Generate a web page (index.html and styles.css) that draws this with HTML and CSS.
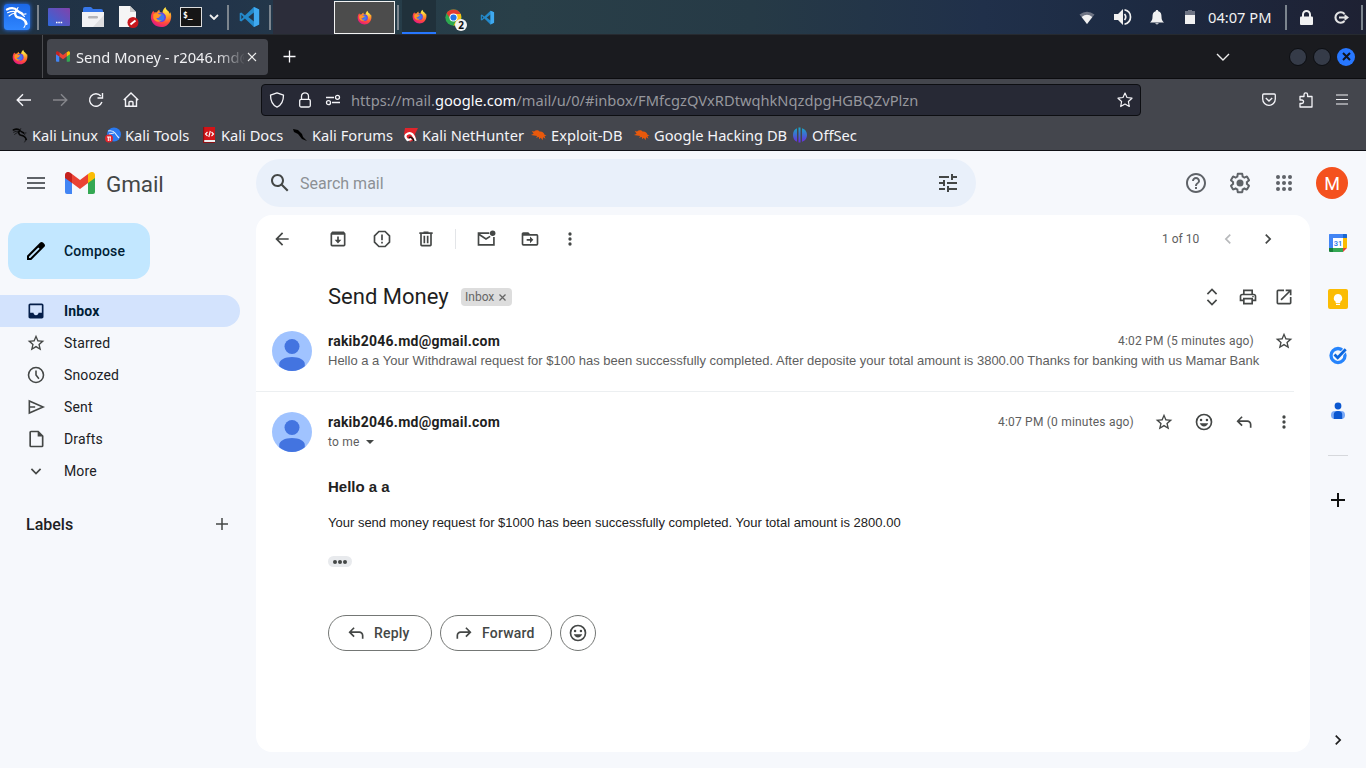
FILE: index.html
```html
<!DOCTYPE html>
<html lang="en">
<head>
<meta charset="utf-8">
<title>Send Money - Gmail</title>
<link rel="stylesheet" href="styles.css">
</head>
<body>
<svg class="defs" width="0" height="0" aria-hidden="true">
  <defs>
    <radialGradient id="fxg" cx=".75" cy=".15" r=".95"><stop offset="0" stop-color="#fff04a"/><stop offset=".35" stop-color="#ffa42c"/><stop offset=".68" stop-color="#ff4b3a"/><stop offset="1" stop-color="#e31587"/></radialGradient>
    <linearGradient id="desk" x1="0" y1="1" x2="1" y2="0"><stop offset="0" stop-color="#2e69dc"/><stop offset="1" stop-color="#8242aa"/></linearGradient>
    <linearGradient id="off" x1="0" y1="0" x2="0" y2="1"><stop offset="0" stop-color="#18a9c4"/><stop offset="1" stop-color="#6a2be0"/></linearGradient>
    <symbol id="firefox" viewBox="0 0 24 24">
      <path fill="url(#fxg)" d="M3.6 5.2c.3.9.8 1.4 1.4 1.8.8-.3 1.800-.4 2.600-.2.5-1.100 1.500-2.200 2.700-2.700-.3 1.200.2 2.100 1.100 2.700l2.300.8c-.2-2.500 1.200-5 3.300-6.600.1 2.100 1.300 3.100 2.500 4.300 1.300 1.100 1.700 2.300 1.800 3.200l.9-1.700c1 2.100 1.100 4.300.8 6.300C22.200 19 17.900 23 12.200 23 6 23 1 18.300 1 12.300c0-2.500.9-5.300 2.600-7.100z"/>
      <circle cx="12.200" cy="12.300" r="5.200" fill="#6c3fe0"/>
      <path fill="#3d7bf0" d="M9 8.500c2-.5 5-.5 6.400 2.200 1.200 2.700-.6 5.500-3.300 5.900-2.500.2-4.400-1.300-4.800-3.300 1.500.8 3 .4 3.700-.4-1-.5-2-2-2-4.400z"/>
      <path fill="#ff9526" d="M3.600 9.300c1.900-1.800 4.700-1.700 6.300-.4l2.500.5c.4 1.100-1.600 1.300-1.900 2.100-.2 1.300-2.300 2-3.700 1.600 1 2.300 3.600 3.300 6 2.200-2.300 3.400-7.700 2-9.200-1.900z"/>
    </symbol>
    <symbol id="dragon" viewBox="0 0 24 24"><g fill="none" stroke="currentColor" stroke-linecap="round" stroke-linejoin="round"><path stroke-width="2.300" d="M2 4.500c4-1.900 8-1.700 10.500 1.300 1.200 1.400 2.500 1.700 4.500 2.700M12 5.500c-3.200 1.600-1.900 6.500 1.500 7 4 .5 6.800 2.500 8 6.300"/><path stroke-width="1.100" d="M2.500 7.800c3-1.400 5.500-1.700 8-1.200M4 11c2-1.700 3.700-2.600 6-3M16 8.500l3 .7 2-.3M17 9.500l2.500 2M11 6l2-3.500M20 16c.8 3 .2 5-1 6.500"/></g></symbol>
    <symbol id="vscode" viewBox="0 0 24 24"><path fill="#2489ca" d="M16.800 1L22.500 3.700v16.600L16.800 23 7 13.700l-4 3.100-1.700-.8v-8l1.700-.8 4 3.100zM3.100 9.500v5l2.400-2.500zM16.800 7.200L10.700 12l6.100 4.800z"/><path fill="#3fa9f0" d="M16.800 1L22.500 3.700v16.600L16.800 23z"/></symbol>
    <symbol id="chrome" viewBox="0 0 24 24"><circle cx="12" cy="12" r="11.500" fill="#2da94f"/><path fill="#fbc116" d="M12 12V7h10.300c2.400 7-1.800 16-10.400 16.500l4.300-8.500z"/><path fill="#e33b2e" d="M2.200 6C6-.5 18-1.500 22.200 7H12l-4.300 7z"/><circle cx="12" cy="12" r="5.700" fill="#fff"/><circle cx="12" cy="12" r="4.400" fill="#2374e8"/></symbol>
    <symbol id="gmail" viewBox="0 0 30 22"><path fill="#4285f4" d="M0 5l7 5v12H2a2 2 0 0 1-2-2z"/><path fill="#34a853" d="M30 5l-7 5v12h5a2 2 0 0 0 2-2z"/><path fill="#ea4335" d="M7 2l8 6 8-6v9l-8 6-8-6z"/><path fill="#c5221f" d="M0 5V3c0-2.600 3-3.900 5-2.400L7 2v9L0 6z"/><path fill="#fbbc04" d="M30 5V3c0-2.600-3-3.900-5-2.400L23 2v9l7-5z"/></symbol>
    <symbol id="bug" viewBox="0 0 16 16"><path fill="#e8590c" d="M3 4.500c2-2 4.500-1.500 5.500 0 2.600-.3 4.600 1 5 3.300l2 .5-2 .9 1 2.600-2.400-1.500-.5 3-1.800-2.600-1.700 1.600-.2-2.300-3 .7 1.300-1.800L3 8.500 0 8l2.600-1.300L.8 4z"/></symbol>
    <symbol id="star" viewBox="0 0 24 24"><path d="M22 9.240l-7.190-.62L12 2 9.190 8.630 2 9.240l5.460 4.730L5.820 21 12 17.270 18.180 21l-1.630-7.030L22 9.240zM12 15.400l-3.760 2.270 1-4.280-3.320-2.880 4.380-.38L12 6.100l1.710 4.040 4.380.38-3.320 2.880 1 4.280L12 15.400z"/></symbol>
    <symbol id="back" viewBox="0 0 24 24"><path d="M20 11H7.830l5.590-5.590L12 4l-8 8 8 8 1.410-1.410L7.830 13H20v-2z"/></symbol>
    <symbol id="reply" viewBox="0 0 24 24"><path d="M19 19v-4c0-1.660-1.340-3-3-3H6.830l3.580 3.590L9 17l-6-6 6-6 1.410 1.410L6.830 10H16c2.760 0 5 2.240 5 5v4z"/></symbol>
    <symbol id="dots" viewBox="0 0 24 24"><circle cx="12" cy="6" r="2"/><circle cx="12" cy="12" r="2"/><circle cx="12" cy="18" r="2"/></symbol>
    <symbol id="chev" viewBox="0 0 24 24"><path d="M8.590 16.590L13.170 12 8.590 7.410 10 6l6 6-6 6z"/></symbol>
    <symbol id="smile" viewBox="0 0 24 24"><circle cx="12" cy="12" r="9" fill="none" stroke="currentColor" stroke-width="2"/><circle cx="8.500" cy="9.500" r="1.500"/><circle cx="15.500" cy="9.500" r="1.500"/><path d="M7 13.500h10c-.8 2.300-2.700 3.800-5 3.800s-4.200-1.500-5-3.800z"/></symbol>
    <symbol id="person" viewBox="0 0 40 40"><circle cx="20" cy="20" r="20" fill="#a0c3ff"/><circle cx="20" cy="15.500" r="7.500" fill="#4374e0"/><path fill="#4374e0" d="M7.200 35.300V33c0-4.200 5.800-7 12.800-7s12.800 2.800 12.800 7v2.300A20 20 0 0 1 20 40a20 20 0 0 1-12.800-4.700z"/></symbol>
  </defs>
</svg>

<div class="panel">
  <span class="kali"><svg width="24" height="24"><use href="#dragon"/></svg></span>
  <i class="bar b1"></i>
  <svg class="desk" width="22" height="18" viewBox="0 0 22 18"><rect width="22" height="18" rx="1" fill="url(#desk)"/><path stroke="#fff" stroke-width="1.500" stroke-dasharray="1.500 .8" d="M8 14.500h7"/></svg>
  <svg class="folder" width="22" height="20" viewBox="0 0 22 20"><path fill="#3676e8" d="M1 2q0-2 2-2h6l2 2h8q2 0 2 2v3H1z"/><path fill="#f2f2f4" d="M0 5h22v15H0z"/><path fill="#dedee0" d="M22 8v12H11z"/><rect x="6" y="9" width="10" height="2.500" rx="1.200" fill="#b4b4b8"/></svg>
  <svg class="file" width="22" height="22" viewBox="0 0 22 22"><path fill="#f5f5f5" d="M1 0h11l6 6v15H1z"/><path fill="#c9c9c9" d="M12 0l6 6h-6z"/><circle cx="15" cy="16.500" r="5.500" fill="#c8171d"/><path stroke="#fff" stroke-width="2" d="M12.500 18.500l5-4"/></svg>
  <svg class="fx1" width="22" height="22"><use href="#firefox"/></svg>
  <span class="term">$_</span>
  <svg class="pchev" width="10" height="6" viewBox="0 0 10 6"><path d="M1 1l4 4 4-4" fill="none" stroke="#f0f0f0" stroke-width="1.800"/></svg>
  <i class="bar b2"></i>
  <svg class="vs1" width="23" height="22"><use href="#vscode"/></svg>
  <i class="bar b3"></i>
  <span class="gapbox"></span>
  <span class="winbtn"><svg width="15" height="15"><use href="#firefox"/></svg></span>
  <i class="bar b4"></i>
  <span class="task"><svg width="15" height="15"><use href="#firefox"/></svg></span>
  <span class="chrome"><svg width="17" height="17"><use href="#chrome"/></svg><b>2</b></span>
  <svg class="vs2" width="15" height="15"><use href="#vscode"/></svg>
  <span class="grow"></span>
  <svg class="wifi" width="16" height="13" viewBox="0 0 16 13"><path fill="#6e7484" d="M.5 3.500Q8-2 15.500 3.500L8 13z"/><path fill="#f1f1f1" d="M2.700 6Q8 1.500 13.300 6L8 13z"/></svg>
  <svg class="vol" width="18" height="18" viewBox="0 0 18 18"><path fill="#f1f1f1" d="M0 6h4l5-5v16l-5-5H0z"/><path fill="none" stroke="#f1f1f1" stroke-width="1.700" d="M10.500 6q2.500 3 0 6M10.500 1.800q6 1.500 6 7.200t-6 7.200"/></svg>
  <svg class="bell" width="14" height="15" viewBox="0 0 14 15"><path fill="#f1f1f1" d="M7 0c1 0 1.200.6 1.300 1.300C11 2 11.500 4 11.500 7c0 3 1 4 2.500 5.500H0C1.500 11 2.500 10 2.500 7c0-3 .5-5 3.200-5.700C5.800.6 6 0 7 0zM5 13.300h4Q7 15.500 5 13.300z"/></svg>
  <svg class="batt" width="10" height="14" viewBox="0 0 10 14"><path fill="#6e7484" d="M3 0h4v1h3v5H0V1h3z"/><path fill="#f1f1f1" d="M0 5h10v9H0z"/></svg>
  <span class="clock">04:07 PM</span>
  <i class="bar b5"></i>
  <svg class="lock" width="13" height="15" viewBox="0 0 13 15"><path fill="none" stroke="#f1f1f1" stroke-width="2" d="M3 7V4.500a3.500 3.500 0 0 1 7 0V7"/><rect y="6.500" width="13" height="8.500" rx="1" fill="#f1f1f1"/></svg>
  <svg class="logout" width="15" height="13" viewBox="0 0 15 13"><path fill="none" stroke="#e4e4e4" stroke-width="2.100" d="M10.500 3a5.200 5.200 0 1 0 0 7"/><path fill="#e4e4e4" d="M5 5.500h5.500V3L15 6.500 10.500 10V7.500H5z"/></svg>
  <i class="bar b6"></i>
</div>

<div class="tabs">
  <span class="fxview"><svg width="16" height="16"><use href="#firefox"/></svg></span>
  <div class="tab"><svg width="14" height="11"><use href="#gmail"/></svg><span class="title">Send Money - r2046.md@gmail.com</span><svg class="x" width="10" height="10" viewBox="0 0 10 10"><path d="M1 1l8 8M9 1L1 9" stroke="#eee" stroke-width="1.100"/></svg></div>
  <svg class="plus" width="13" height="13" viewBox="0 0 13 13"><path d="M6.500 .5v12M.5 6.500h12" stroke="#fbfbfe" stroke-width="1.300"/></svg>
  <span class="grow"></span>
  <svg class="tchev" width="14" height="8" viewBox="0 0 14 8"><path d="M1 1l6 6 6-6" fill="none" stroke="#eee" stroke-width="1.400"/></svg>
  <i class="wb"></i><i class="wb"></i><span class="wclose"><svg width="9" height="9" viewBox="0 0 9 9"><path d="M1 1l7 7M8 1L1 8" stroke="#10141f" stroke-width="2"/></svg></span>
</div>

<div class="nav">
  <svg class="nback" width="16" height="14" viewBox="0 0 16 14"><path d="M15 7H1.500M7 1.200L1.200 7 7 12.800" fill="none" stroke="#f4f4f8" stroke-width="1.400"/></svg>
  <svg class="nfwd" width="16" height="14" viewBox="0 0 16 14"><path d="M1 7h13.500M9 1.200L14.800 7 9 12.800" fill="none" stroke="#86878c" stroke-width="1.400"/></svg>
  <svg class="nrel" width="16" height="16" viewBox="0 0 16 16"><path d="M13.900 10A6.300 6.300 0 1 1 12.800 4" fill="none" stroke="#f4f4f8" stroke-width="1.400"/><path d="M9.500 6h5V1" fill="none" stroke="#f4f4f8" stroke-width="1.400"/></svg>
  <svg class="nhome" width="16" height="16" viewBox="0 0 16 16"><path d="M.8 8L8 1l7.200 7M2.500 7v7.300h11V7M6 14v-3.500q0-1 1-1h2q1 0 1 1V14" fill="none" stroke="#f4f4f8" stroke-width="1.400"/></svg>
  <div class="url">
    <svg class="shield" width="16" height="16" viewBox="0 0 16 16"><path d="M8 .8l6.500 2.300c0 5-1 9.700-6.500 12.100C2.500 12.800 1.500 8.100 1.500 3.100z" fill="none" stroke="#f4f4f8" stroke-width="1.300" stroke-linejoin="round"/></svg>
    <svg class="ulock" width="14" height="16" viewBox="0 0 14 16"><path d="M3.500 7.500V4.300a3.500 3.500 0 0 1 7 0v3.200" fill="none" stroke="#f4f4f8" stroke-width="1.300"/><rect x="1.700" y="7.300" width="10.600" height="7.700" rx="1.500" fill="none" stroke="#f4f4f8" stroke-width="1.300"/></svg>
    <svg class="perm" width="16" height="12" viewBox="0 0 16 12"><path d="M1 3.500h8M7 8.500h8" stroke="#f4f4f8" stroke-width="1.400"/><circle cx="12.500" cy="3.300" r="2" fill="none" stroke="#f4f4f8" stroke-width="1.300"/><circle cx="3.500" cy="8.700" r="2" fill="none" stroke="#f4f4f8" stroke-width="1.300"/></svg>
    <span class="addr">https://mail.<b>google.com</b>/mail/u/0/#inbox/FMfcgzQVxRDtwqhkNqzdpgHGBQZvPlzn</span>
    <svg class="ustar" width="16" height="16" viewBox="0 0 16 16"><path d="M8 1l2 4.500 5 .7-3.600 3.300.9 5L8 12l-4.300 2.500.9-5L1 6.200l5-.7z" fill="none" stroke="#f4f4f8" stroke-width="1.200" stroke-linejoin="round"/></svg>
  </div>
  <span class="grow"></span>
  <svg class="pocket" width="14" height="14" viewBox="0 0 14 14"><path d="M1.700 1h10.600q1 0 1 1v4a6.300 6.300 0 0 1-12.600 0V2q0-1 1-1zM3.800 5L7 8l3.200-3" fill="none" stroke="#f4f4f8" stroke-width="1.300"/></svg>
  <svg class="ext" width="14" height="16" viewBox="0 0 14 16"><path d="M1 8V4.500h4V2.700a1.800 1.800 0 0 1 3.600 0v1.800H13V15H1v-3.500h1.800a1.700 1.700 0 0 0 0-3.500z" fill="none" stroke="#f4f4f8" stroke-width="1.300" stroke-linejoin="round"/></svg>
  <svg class="burger" width="12" height="11" viewBox="0 0 12 11"><path d="M0 1h12M0 5.500h12M0 10h12" stroke="#f4f4f8" stroke-width="1.200"/></svg>
</div>

<div class="marks">
  <a class="m1"><svg class="blk" width="16" height="16"><use href="#dragon"/></svg>Kali Linux</a>
  <a class="m2"><svg width="16" height="16" viewBox="0 0 16 16"><circle cx="9" cy="7.500" r="7" fill="#2a79f0"/><path d="M3 4q5-1 7 2t4 5M4 7l5-1" fill="none" stroke="#dbe9ff" stroke-width="1.200"/><circle cx="4" cy="11.500" r="4" fill="#e0242b"/><path d="M2 10h4M3.300 10v4M5.200 10v4" stroke="#fff"/></svg>Kali Tools</a>
  <a class="m3"><svg width="16" height="16" viewBox="0 0 16 16"><path fill="#d21418" d="M2 0h12v13H2z"/><path fill="#eee" d="M3 13h11v2H3z"/><path fill="#8d1013" d="M2 0h1.200v16H2zM3 15h11v1H3z"/><path d="M6.500 5l-2 2 2 2M10.500 5l2 2-2 2M9.300 4L7.800 10" stroke="#fff" stroke-width="1.100" fill="none"/></svg>Kali Docs</a>
  <a class="m4"><svg class="blk" width="16" height="16" viewBox="0 0 16 16"><path d="M1 2l5 1 4 4 1 3 4 4-5-2-4-5-4-2z" fill="#000"/></svg>Kali Forums</a>
  <a class="m5"><svg width="16" height="16" viewBox="0 0 16 16"><path fill="#e0252c" d="M3 1h13l-3 6 1 5-6 3-6-8z"/><path d="M13.500 14Q11 4.500 6 6.500T5.500 13l4-1" fill="none" stroke="#fff" stroke-width="2.300"/><path d="M7 11q1.500-2 4 1l1 2" stroke="#111" stroke-width="1.500" fill="none"/></svg>Kali NetHunter</a>
  <a class="m6"><svg width="16" height="16"><use href="#bug"/></svg>Exploit-DB</a>
  <a class="m7"><svg width="16" height="16"><use href="#bug"/></svg>Google Hacking DB</a>
  <a class="m8"><svg width="16" height="16" viewBox="0 0 16 16"><path fill="url(#off)" d="M5 1.200v13.600Q1 13 1 8t4-6.800zM6.500.5h2v15h-2zM10 1.200v13.600q5-1.800 5-6.800t-5-6.800z"/></svg>OffSec</a>
</div>

<div class="gmail">
  <header class="head">
    <svg class="menu" width="18" height="12" viewBox="0 0 18 12"><path d="M0 1h18M0 6h18M0 11h18" stroke="#5f6368" stroke-width="2"/></svg>
    <svg class="glogo" width="30" height="22"><use href="#gmail"/></svg>
    <span class="gname">Gmail</span>
    <div class="search">
      <svg width="24" height="24" viewBox="0 0 24 24"><path d="M20.490 19l-5.730-5.730C15.530 12.200 16 10.910 16 9.500 16 5.910 13.090 3 9.500 3S3 5.910 3 9.500 5.910 16 9.500 16c1.410 0 2.700-.47 3.770-1.240L19 20.490 20.490 19zM5 9.500C5 7.010 7.010 5 9.500 5S14 7.010 14 9.500 11.990 14 9.500 14 5 11.990 5 9.500z"/></svg>
      <span class="ph">Search mail</span>
      <svg width="24" height="24" viewBox="0 0 24 24"><path d="M3 17v2h6v-2H3zM3 5v2h10V5H3zm10 16v-2h8v-2h-8v-2h-2v6h2zM7 9v2H3v2h4v2h2V9H7zm14 4v-2H11v2h10zm-6-4h2V7h4V5h-4V3h-2v6z"/></svg>
    </div>
    <span class="grow"></span>
    <div class="tools">
      <svg width="24" height="24" viewBox="0 0 24 24"><path d="M11 18h2v-2h-2v2zm1-16C6.480 2 2 6.480 2 12s4.480 10 10 10 10-4.480 10-10S17.520 2 12 2zm0 18c-4.410 0-8-3.590-8-8s3.590-8 8-8 8 3.590 8 8-3.590 8-8 8zm0-14c-2.210 0-4 1.790-4 4h2c0-1.100.9-2 2-2s2 .9 2 2c0 2-3 1.750-3 5h2c0-2.250 3-2.500 3-5 0-2.210-1.790-4-4-4z"/></svg>
      <svg width="24" height="24" viewBox="0 0 24 24"><path d="M13.850 22.250h-3.700c-.74 0-1.360-.54-1.450-1.270l-.27-1.890c-.27-.14-.53-.29-.79-.46l-1.800.72c-.7.26-1.470-.03-1.810-.65L2.200 15.530c-.35-.66-.2-1.440.36-1.880l1.530-1.190c-.01-.15-.02-.3-.02-.46 0-.15.01-.31.02-.46l-1.520-1.190c-.59-.45-.74-1.260-.37-1.880l1.850-3.190c.34-.62 1.110-.9 1.790-.63l1.810.73c.26-.17.52-.32.78-.46l.27-1.910c.09-.7.71-1.250 1.440-1.250h3.700c.74 0 1.360.54 1.450 1.270l.27 1.890c.27.14.53.29.79.46l1.800-.72c.71-.26 1.480.03 1.820.65l1.840 3.180c.36.66.2 1.440-.36 1.880l-1.520 1.190c.01.15.02.3.02.46s-.01.31-.02.46l1.520 1.190c.56.45.72 1.230.37 1.860l-1.860 3.220c-.34.62-1.110.9-1.800.63l-1.800-.72c-.26.17-.52.32-.78.46l-.27 1.910c-.1.68-.72 1.220-1.460 1.220zm-3.230-2h2.760l.37-2.550.53-.22c.44-.18.88-.44 1.340-.78l.45-.34 2.380.96 1.380-2.400-2.030-1.580.07-.56c.03-.26.06-.51.06-.78s-.03-.53-.06-.78l-.07-.56 2.030-1.580-1.390-2.400-2.390.96-.45-.35c-.42-.32-.87-.58-1.330-.77l-.52-.22-.37-2.550h-2.760l-.37 2.550-.53.21c-.44.19-.88.44-1.340.79l-.45.33-2.380-.95-1.390 2.390 2.030 1.580-.07.56a7 7 0 0 0-.06.79c0 .26.02.53.06.78l.07.56-2.030 1.580 1.380 2.400 2.390-.96.45.35c.43.33.86.58 1.330.77l.53.22.38 2.550z"/><circle cx="12" cy="12" r="3.500"/></svg>
      <svg width="24" height="24" viewBox="0 0 24 24"><circle cx="6" cy="6" r="2"/><circle cx="12" cy="6" r="2"/><circle cx="18" cy="6" r="2"/><circle cx="6" cy="12" r="2"/><circle cx="12" cy="12" r="2"/><circle cx="18" cy="12" r="2"/><circle cx="6" cy="18" r="2"/><circle cx="12" cy="18" r="2"/><circle cx="18" cy="18" r="2"/></svg>
    </div>
    <span class="me">M</span>
  </header>

  <div class="content">
    <aside class="side">
      <div class="compose"><svg width="24" height="24" viewBox="0 0 24 24"><path fill="#000" d="M20.400 5L19 3.600c-.8-.8-2-.8-2.800 0L3 16.800V21h4.200L20.400 7.800c.8-.8.8-2 0-2.800zM6.300 19H5v-1.300l9.300-9.300 1.300 1.300z"/></svg><span>Compose</span></div>
      <nav>
        <a class="on"><svg width="20" height="20" viewBox="0 0 24 24"><path d="M19 3H5c-1.100 0-2 .9-2 2v14c0 1.100.9 2 2 2h14c1.100 0 2-.9 2-2V5c0-1.100-.9-2-2-2zm0 11h-4c0 1.700-1.300 3-3 3s-3-1.300-3-3H5V5h14z"/></svg><span>Inbox</span></a>
        <a><svg width="20" height="20"><use href="#star"/></svg><span>Starred</span></a>
        <a><svg width="20" height="20" viewBox="0 0 24 24"><path fill="none" stroke="currentColor" stroke-width="1.900" d="M12 3a9 9 0 1 0 0 18 9 9 0 0 0 0-18zM12 6.500V12l3.500 4.500"/></svg><span>Snoozed</span></a>
        <a><svg width="20" height="20" viewBox="0 0 24 24"><path fill="none" stroke="currentColor" stroke-width="1.900" d="M4 4.700L20.500 12 4 19.300zM4 12h7"/></svg><span>Sent</span></a>
        <a><svg width="20" height="20" viewBox="0 0 24 24"><path fill-rule="evenodd" d="M6 2h9l6 6v12a2 2 0 0 1-2 2H6a2 2 0 0 1-2-2V4c0-1.100.9-2 2-2zm0 2v16h13V9h-5V4z"/></svg><span>Drafts</span></a>
        <a><svg width="20" height="20" viewBox="0 0 24 24"><path fill="none" stroke="currentColor" stroke-width="2" d="M6.500 9.500L12 15l5.500-5.500"/></svg><span>More</span></a>
      </nav>
      <div class="labels"><span>Labels</span><svg width="14" height="14" viewBox="0 0 14 14"><path d="M7 1v12M1 7h12" stroke="#444746" stroke-width="1.500"/></svg></div>
    </aside>

    <main>
      <div class="bar-tools">
        <svg class="t1"><use href="#back"/></svg>
        <svg class="t2" viewBox="0 0 24 24"><path fill-rule="evenodd" d="M5 3h14l2 2.500V19a2 2 0 0 1-2 2H5a2 2 0 0 1-2-2V5.500zm0 4v12h14V7zM11 9h2v4h3l-4 4.500L8 13h3z"/></svg>
        <svg class="t3" viewBox="0 0 24 24"><path fill="none" stroke="currentColor" stroke-width="2" d="M8.300 3h7.400L21 8.300v7.400L15.700 21H8.300L3 15.700V8.300z"/><path d="M11 6.500h2v7h-2zM11 15.300h2v2h-2z"/></svg>
        <svg class="t4" viewBox="0 0 24 24"><path fill-rule="evenodd" d="M9 3h6v1h5v2h-1v13a2 2 0 0 1-2 2H7a2 2 0 0 1-2-2V6H4V4h5zM7 6v13h10V6zm2 2h2v9H9zm4 0h2v9h-2z"/></svg>
        <i class="sep"></i>
        <svg class="t5" viewBox="0 0 24 24"><path fill="none" stroke="currentColor" stroke-width="2" d="M16 5H3v14h18.500V9.500M3 6l9 6 5-3.200"/><circle cx="20" cy="5" r="3.300"/></svg>
        <svg class="t6" viewBox="0 0 24 24"><path fill-rule="evenodd" d="M4 4h6l2 2h8a2 2 0 0 1 2 2v10a2 2 0 0 1-2 2H4a2 2 0 0 1-2-2V6c0-1.100.9-2 2-2zm0 4v10h16V8zM12 9l4 4-4 4v-3H8v-2h4z"/></svg>
        <svg class="t7"><use href="#dots"/></svg>
        <span class="grow"></span>
        <span class="count">1 of 10</span>
        <svg class="pv"><use href="#chev"/></svg>
        <svg class="nx"><use href="#chev"/></svg>
      </div>

      <div class="subject">
        <h1>Send Money</h1>
        <span class="chip">Inbox<svg width="7" height="7" viewBox="0 0 7 7"><path d="M.5 .5l6 6M6.500 .5l-6 6" stroke="#666" stroke-width="1.300"/></svg></span>
        <span class="grow"></span>
        <svg viewBox="0 0 24 24"><path fill="none" stroke="currentColor" stroke-width="2" d="M6.500 8.500L12 3l5.500 5.500M6.500 15.500L12 21l5.500-5.500"/></svg>
        <svg viewBox="0 0 24 24"><path fill-rule="evenodd" d="M6 3h12v5h1c1.700 0 3 1.300 3 3v6h-4v4H6v-4H2v-6c0-1.700 1.300-3 3-3h1zm2 2v3h8V5zM5 10q-1 0-1 1v4h2v-2h12v2h2v-4q0-1-1-1zm3 5v4h8v-4z"/><circle cx="18" cy="11.500" r="1"/></svg>
        <svg viewBox="0 0 24 24"><path d="M19 19H5V5h7V3H5a2 2 0 0 0-2 2v14a2 2 0 0 0 2 2h14a2 2 0 0 0 2-2v-7h-2zM14 3v2h3.590l-9.830 9.830 1.410 1.410L19 6.410V10h2V3z"/></svg>
      </div>

      <section class="msg first">
        <svg class="avatar"><use href="#person"/></svg>
        <div class="info">
          <div class="line"><span class="from">rakib2046.md@gmail.com</span><span class="grow"></span><span class="time">4:02 PM (5 minutes ago)</span><svg><use href="#star"/></svg></div>
          <p class="snippet">Hello a a Your Withdrawal request for $100 has been successfully completed. After deposite your total amount is 3800.00 Thanks for banking with us Mamar Bank</p>
        </div>
      </section>

      <section class="msg second">
        <svg class="avatar"><use href="#person"/></svg>
        <div class="info">
          <div class="line"><span class="from">rakib2046.md@gmail.com</span><span class="grow"></span><span class="time">4:07 PM (0 minutes ago)</span><svg><use href="#star"/></svg><svg><use href="#smile"/></svg><svg><use href="#reply"/></svg><svg><use href="#dots"/></svg></div>
          <p class="tome">to me<i></i></p>
          <h3>Hello a a</h3>
          <p class="text">Your send money request for $1000 has been successfully completed. Your total amount is 2800.00</p>
          <span class="trim"><i></i><i></i><i></i></span>
          <div class="actions">
            <span class="btn reply"><svg><use href="#reply"/></svg><b>Reply</b></span>
            <span class="btn forward"><svg class="flip"><use href="#reply"/></svg><b>Forward</b></span>
            <span class="btn react"><svg><use href="#smile"/></svg></span>
          </div>
        </div>
      </section>
    </main>

    <aside class="rail">
      <svg width="20" height="20" viewBox="0 0 20 20"><path fill="#4285f4" d="M1.500 1H15v4H5v11H1V2q0-1 .5-1z"/><path fill="#1967d2" d="M15 1h3.500q.5 0 .5 1v3h-4z"/><path fill="#fbbc04" d="M15 5h4v10h-4z"/><path fill="#34a853" d="M5 15h10v4H5z"/><path fill="#188038" d="M1 15h4v4H2q-1 0-1-1z"/><path fill="#ea4335" d="M15 15h4l-4 4z"/><path fill="#fff" d="M5 5h10v10H5z"/><text x="10" y="13.200" text-anchor="middle" class="cal">31</text></svg>
      <svg width="20" height="20" viewBox="0 0 20 20"><rect width="20" height="20" rx="2" fill="#fbbc04"/><path fill="#fff" d="M10 5a4.200 4.200 0 0 0-2.300 7.700V14h4.600v-1.300A4.200 4.200 0 0 0 10 5zM8 14.800h4V16H8z"/></svg>
      <svg width="20" height="20" viewBox="0 0 20 20"><circle cx="10" cy="10.500" r="7" fill="none" stroke="#2684fc" stroke-width="3.300"/><path d="M6.500 9.500l3.200 3.200 8-8.500" fill="none" stroke="#f7f8fc" stroke-width="4.500"/><path d="M6.500 9.500l3.200 3.200 8-8.500" fill="none" stroke="#0b66dd" stroke-width="2.800"/></svg>
      <svg width="20" height="20" viewBox="0 0 20 20"><circle cx="10" cy="5" r="3.400" fill="#0b57d0"/><rect x="3" y="10" width="14" height="8" rx="3.800" fill="#7baaf7"/><path fill="#0b57d0" d="M5.800 18v-4.500q0-3.500 4.200-3.500t4.200 3.500V18z"/></svg>
      <i class="rule"></i>
      <svg class="rplus" width="14" height="14" viewBox="0 0 14 14"><path d="M7 0v14M0 7h14" stroke="#111" stroke-width="2"/></svg>
      <span class="grow"></span>
      <svg class="rchev" width="20" height="20"><use href="#chev"/></svg>
    </aside>
  </div>
</div>
</body>
</html>
```
FILE: styles.css
```css
* { box-sizing: border-box; }
body { margin: 0; width: 1366px; height: 768px; overflow: hidden; display: flex; flex-direction: column; font-family: Roboto, "Liberation Sans", sans-serif; background: #f6f8fc; }
.defs { position: absolute; }
svg { display: block; flex: none; fill: currentColor; }
h1, h3, p { margin: 0; font-weight: 400; }
.grow { flex: 1; }
i { flex: none; }

/* desktop panel */
.panel { height: 35px; flex: none; display: flex; align-items: center; background: linear-gradient(90deg, #203243 0, #22344a 16%, #253c49 27%, #293f48 38%, #263a46 55%, #20304a 72%, #1d2b43 82%, #1e2133 100%); border-bottom: 1px solid #262a30; }
.kali { width: 26px; height: 26px; margin-left: 4px; border-radius: 3px; background: linear-gradient(#1b68e8, #2f86ff); box-shadow: 0 0 4px #2777ff; color: #fff; display: grid; place-items: center; }
.bar { width: 2px; height: 25px; background: #7c858e; }
.b1 { margin-left: 7px; }
.desk { margin-left: 9px; }
.folder { margin-left: 12px; }
.file { margin-left: 14px; }
.fx1 { margin-left: 10px; }
.term { width: 22px; height: 20px; margin-left: 8px; border: 1px solid #ddd; background: #161616; color: #fff; font: bold 8px/9px "DejaVu Sans Mono", monospace; padding: 3px 0 0 2px; }
.pchev { margin-left: 7px; }
.b2 { margin-left: 8px; }
.vs1 { margin-left: 9px; }
.b3 { margin-left: 8px; }
.gapbox { width: 61px; height: 34px; margin-left: 2px; background: #2c2d3a; }
.winbtn { width: 61px; height: 33px; border: 1px solid #f3f3f3; margin-top: 1px; background: #4c4c4c; display: grid; place-items: center; }
.b4 { margin-left: 2px; }
.task { width: 34px; height: 34px; margin-left: 3px; background: #20313b; border-bottom: 2px solid #2777ff; display: grid; place-items: center; }
.chrome { position: relative; margin-left: 9px; }
.chrome b { position: absolute; left: 10px; top: 10px; width: 12px; height: 12px; border-radius: 50%; background: #f2f2f2; color: #111; font: bold 10px/12px "Noto Sans", sans-serif; text-align: center; }
.vs2 { margin-left: 18px; }
.vol { margin-left: 19px; }
.bell { margin-left: 18px; }
.batt { margin-left: 21px; }
.clock { width: 64px; margin: 0 13px 0 13px; color: #f2f2f2; font: 14.67px/20px "Noto Sans", sans-serif; white-space: nowrap; }
.lock { margin-left: 13px; }
.logout { margin-left: 21px; }
.b6 { margin: 0 3px 0 12px; }

/* browser chrome */
.tabs { height: 44px; flex: none; display: flex; align-items: center; background: #1a1b1f; border-bottom: 1px solid #0c0c0f; font: 14.67px/20px "Noto Sans", sans-serif; }
.fxview { width: 43px; height: 43px; padding-left: 12px; border-right: 1px solid #4b4c50; display: flex; align-items: center; }
.tab { width: 221px; height: 36px; margin-left: 4px; padding: 0 11px 0 9px; border-radius: 4px; background: #44464d; display: flex; align-items: center; color: #f0f0f3; }
.title { width: 168px; margin-left: 6px; margin-right: 3px; overflow: hidden; white-space: nowrap; -webkit-mask-image: linear-gradient(90deg, #000 140px, transparent 170px); mask-image: linear-gradient(90deg, #000 140px, transparent 170px); }
.plus { margin-left: 15px; }
.tchev { margin-right: 59px; }
.wb { width: 18px; height: 18px; margin-right: 6px; border-radius: 50%; background: #353b48; border: 1px solid #0c0e12; }
.wclose { width: 18px; height: 18px; margin-right: 11px; border-radius: 50%; background: #2777ff; display: grid; place-items: center; }
.nav { height: 41px; flex: none; display: flex; align-items: center; background: #44464d; font: 14.67px/20px "Noto Sans", sans-serif; }
.nback { margin-left: 16px; }
.nfwd { margin-left: 20px; }
.nrel { margin-left: 20px; }
.nhome { margin-left: 19px; }
.url { width: 880px; height: 32px; margin-left: 122px; border: 1px solid #0d0e12; border-radius: 4px; background: #272935; display: flex; align-items: center; }
.shield { margin-left: 7px; }
.ulock { margin-left: 13px; }
.perm { margin-left: 13px; }
.addr { margin-left: 10px; color: #96979d; flex: 1; white-space: nowrap; }
.addr b { font-weight: 400; color: #fbfbfe; }
.ustar { margin-right: 7px; }
.ext { margin-left: 23px; }
.burger { margin: 0 18px 0 23px; }
.marks { height: 31px; flex: none; padding-left: 12px; display: flex; align-items: center; background: #44464d; border-bottom: 1px solid #101116; color: #f4f4f8; font: 14.67px/20px "Noto Sans", sans-serif; white-space: nowrap; }
.marks a { display: flex; align-items: center; gap: 4px; }
.blk { color: #050505; }
.m1 { width: 93px; } .m2 { width: 96px; } .m3 { width: 91px; } .m4 { width: 110px; } .m5 { width: 129px; } .m6 { width: 103px; } .m7 { width: 158px; }

/* mail header */
.gmail { flex: 1; display: flex; flex-direction: column; background: #f6f8fc; color: #444746; }
.head { height: 64px; flex: none; display: flex; align-items: center; }
.menu { margin-left: 27px; }
.glogo { margin-left: 20px; }
.gname { width: 58px; margin: 1px 92px 0 11px; font-size: 22.500px; line-height: 28px; color: #444746; letter-spacing: -.1px; }
.search { width: 720px; height: 48px; border-radius: 24px; background: #e9f0fa; padding: 0 16px 0 12px; display: flex; align-items: center; }
.ph { flex: 1; margin-left: 8px; font-size: 16px; color: #8c9095; }
.tools { display: flex; gap: 20px; color: #5f6368; }
.me { width: 32px; height: 32px; margin: 0 18px 0 20px; border-radius: 50%; background: #f4511e; color: #fff; font-size: 18px; line-height: 33px; text-align: center; }

/* sidebar */
.content { flex: 1; display: flex; }
.side { width: 256px; padding-top: 8px; font-size: 14px; color: #202124; }
.compose { width: 142px; height: 56px; margin-left: 8px; padding-left: 16px; border-radius: 16px; background: #c2e7ff; color: #001d35; display: flex; align-items: center; gap: 16px; font-weight: 500; letter-spacing: .2px; }
.side nav { margin-top: 16px; }
.side nav a { width: 240px; height: 32px; padding-left: 26px; display: flex; align-items: center; gap: 18px; letter-spacing: .15px; }
.side nav svg { color: #444746; }
.side nav .on { background: #d3e3fd; border-radius: 0 16px 16px 0; font-weight: 700; color: #001d35; }
.side nav .on svg { color: #041e49; }
.labels { margin: 25px 27px 0 26px; height: 24px; display: flex; align-items: center; justify-content: space-between; font-size: 16px; font-weight: 500; }

/* message pane */
main { width: 1054px; height: 537px; border-radius: 16px; background: #fff; color: #444746; display: flex; flex-direction: column; }
main svg { width: 20px; height: 20px; }
.bar-tools { height: 48px; padding: 0 32px 0 16px; display: flex; align-items: center; }
.t2 { margin-left: 36px; } .t3, .t4, .t6 { margin-left: 24px; } .t5 { margin-left: 20px; } .t7 { margin-left: 20px; }
.sep { width: 1px; height: 20px; margin-left: 19px; background: #e3e5e8; }
.count { width: 36px; margin-right: 20px; font-size: 12px; white-space: nowrap; color: #5e5e5e; }
.pv { transform: scaleX(-1); color: #b7b9bb; }
.nx { margin-left: 20px; }
.subject { height: 68px; padding: 0 16px 0 72px; display: flex; align-items: center; gap: 16px; }
.subject h1 { width: 124px; font-size: 22px; line-height: 28px; color: #1f1f1f; white-space: nowrap; }
.chip { width: 51px; height: 18px; margin-left: -7px; padding-left: 4px; border-radius: 4px; background: #ddd; color: #666; font-size: 12px; line-height: 18px; display: flex; align-items: center; gap: 5px; }
.subject .chip svg { width: 7px; height: 7px; margin-top: 1px; }
.msg { display: flex; padding-left: 16px; margin-right: 16px; }
main .avatar { width: 40px; height: 40px; }
.info { flex: 1; margin-left: 16px; }
.first { height: 61px; border-bottom: 1px solid #eceff1; }
.second { padding-top: 20px; }
.line { height: 20px; display: flex; align-items: center; gap: 20px; }
.from { font-size: 14px; font-weight: 700; color: #1f1f1f; letter-spacing: .25px; }
.time { font-size: 12px; color: #5e5e5e; letter-spacing: .2px; }
.snippet { font: 13px/20px "Liberation Sans", Arial, sans-serif; color: #5e5e5e; white-space: nowrap; }
.tome { height: 20px; font-size: 12px; line-height: 20px; color: #5e5e5e; letter-spacing: .2px; display: flex; align-items: center; }
.tome i { margin-left: 6px; border: 4px solid transparent; border-top-color: #444746; border-bottom: 0; }
.info h3 { margin-top: 25px; font: bold 15px/20px "Liberation Sans", Arial, sans-serif; color: #222; }
.text { margin-top: 16px; font: 13px/20px "Liberation Sans", Arial, sans-serif; color: #222; white-space: nowrap; }
.trim { width: 24px; height: 11px; margin-top: 23px; border-radius: 5.500px; background: #e8eaed; display: flex; align-items: center; justify-content: center; gap: 1px; }
.trim i { width: 4px; height: 4px; border-radius: 50%; background: #444746; }
.actions { display: flex; gap: 8px; margin-top: 48px; }
.btn { height: 36px; border: 1px solid #747775; border-radius: 18px; display: flex; align-items: center; font-size: 14px; }
.btn b { font-weight: 500; letter-spacing: .2px; }
.reply { width: 104px; padding-left: 17px; gap: 8px; }
.forward { width: 112px; padding-left: 13px; gap: 8px; }
.react { width: 36px; justify-content: center; }
.flip { transform: scaleX(-1); }

/* add-on rail */
.rail { width: 56px; height: 537px; padding-top: 18px; display: flex; flex-direction: column; align-items: center; }
.rail svg + svg { margin-top: 36px; }
.cal { font: 500 7.500px Roboto, sans-serif; fill: #1a73e8; }
.rule { width: 20px; height: 1px; margin-top: 34px; background: #d6d8dc; }
.rplus { margin-top: 37px; }
.rchev { color: #1f1f1f; margin-bottom: 2px; }
```
